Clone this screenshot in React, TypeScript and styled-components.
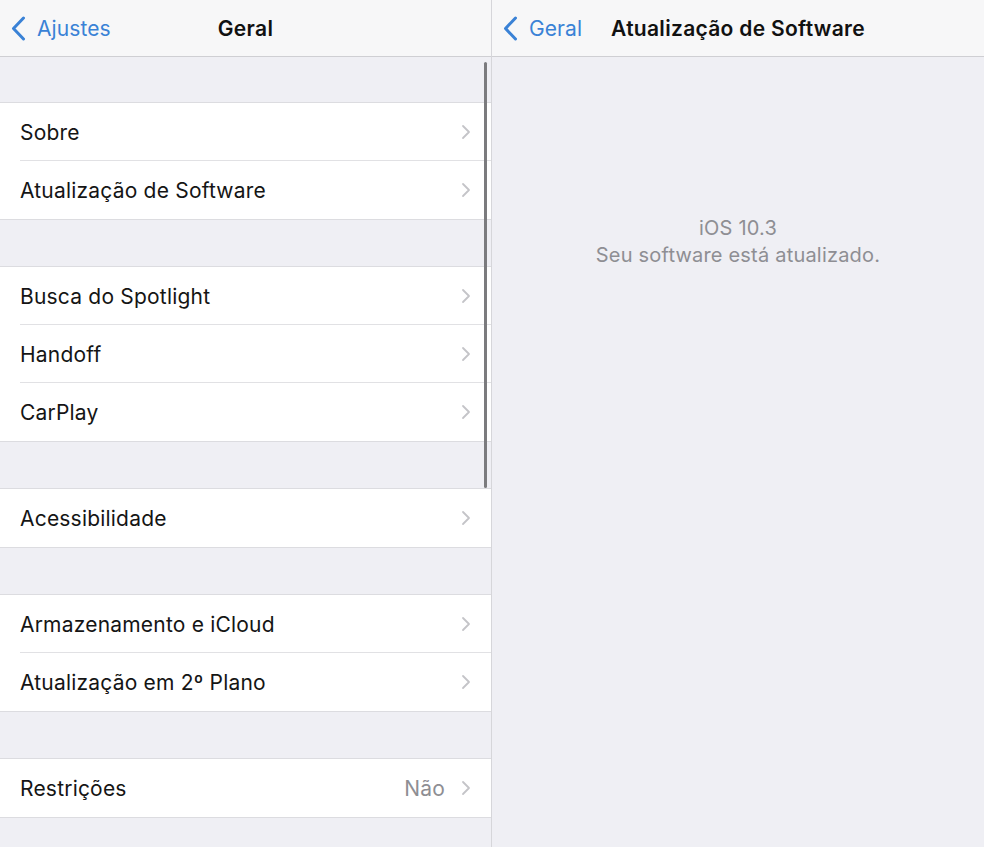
import React from 'react';
import styled, { createGlobalStyle } from 'styled-components';

const GlobalStyle = createGlobalStyle`
  html, body {
    margin: 0;
    padding: 0;
    background: #efeff4;
  }
  body {
    font-family: Inter, Roboto, "Liberation Sans", sans-serif;
    -webkit-font-smoothing: antialiased;
  }
`;

const Screen = styled.div`
  display: flex;
  width: 984px;
  height: 847px;
  overflow: hidden;
  background: #efeff4;
`;

const Pane = styled.div<{ $width?: number }>`
  position: relative;
  display: flex;
  flex-direction: column;
  ${props => (props.$width ? `width: ${props.$width}px; flex-shrink: 0;` : 'flex: 1;')}
  border-right: ${props => (props.$width ? '1px solid #d6d6da' : 'none')};
`;

const NavBar = styled.div`
  position: relative;
  display: flex;
  align-items: center;
  justify-content: center;
  height: 57px;
  flex-shrink: 0;
  background: #f7f7f8;
  border-bottom: 1px solid #cfcfd3;
  box-sizing: border-box;
`;

const BackButton = styled.div`
  position: absolute;
  left: 11px;
  top: 0;
  bottom: 0;
  display: flex;
  align-items: center;
  gap: 11px;
  color: #3a82d6;
  font-size: 21px;
  letter-spacing: 0.1px;
`;

const NavTitle = styled.div`
  font-size: 21px;
  font-weight: 600;
  color: #111;
  letter-spacing: 0.3px;
`;

const List = styled.div`
  display: flex;
  flex-direction: column;
  padding-top: 45px;
  gap: 46px;
`;

const Group = styled.div`
  background: #fff;
  border-top: 1px solid #dcdce0;
  border-bottom: 1px solid #dcdce0;
`;

const Row = styled.div<{ $last?: boolean }>`
  position: relative;
  display: flex;
  align-items: center;
  height: 58px;
  padding-left: 20px;
  padding-right: 20px;
  &::after {
    content: '';
    display: ${props => (props.$last ? 'none' : 'block')};
    position: absolute;
    left: 20px;
    right: 0;
    bottom: 0;
    height: 1px;
    background: #e1e1e4;
  }
`;

const RowLabel = styled.div`
  flex: 1;
  font-size: 21px;
  color: #151515;
  letter-spacing: 0.2px;
`;

const RowValue = styled.div`
  font-size: 21px;
  color: #8e8e93;
  letter-spacing: 0.2px;
  margin-right: 16px;
`;

const ScrollIndicator = styled.div`
  position: absolute;
  right: 4px;
  top: 62px;
  width: 3px;
  height: 426px;
  border-radius: 2px;
  background: #7b7b7e;
`;

const StatusBlock = styled.div`
  display: flex;
  flex-direction: column;
  align-items: center;
  padding-top: 158px;
  color: #8e8e93;
  font-size: 20px;
  line-height: 27px;
  letter-spacing: 0.2px;
`;

const Chevron = () => (
  <svg width="10" height="16" viewBox="0 0 10 16">
    <path d="M2 2 L8 8 L2 14" fill="none" stroke="#c4c4c8" strokeWidth="1.8" strokeLinecap="round" strokeLinejoin="round" />
  </svg>
);

const BackChevron = () => (
  <svg width="15" height="25" viewBox="0 0 15 25">
    <path d="M12.5 2 L2.5 12.5 L12.5 23" fill="none" stroke="#3a82d6" strokeWidth="3" strokeLinecap="round" strokeLinejoin="round" />
  </svg>
);

interface Item {
  label: string;
  value?: string;
}

const groups: Item[][] = [
  [{ label: 'Sobre' }, { label: 'Atualização de Software' }],
  [{ label: 'Busca do Spotlight' }, { label: 'Handoff' }, { label: 'CarPlay' }],
  [{ label: 'Acessibilidade' }],
  [{ label: 'Armazenamento e iCloud' }, { label: 'Atualização em 2º Plano' }],
  [{ label: 'Restrições', value: 'Não' }],
];

const App: React.FC = () => (
  <Screen>
    <GlobalStyle />
    <Pane $width={491}>
      <NavBar>
        <BackButton>
          <BackChevron />
          Ajustes
        </BackButton>
        <NavTitle>Geral</NavTitle>
      </NavBar>
      <List>
        {groups.map((items, gi) => (
          <Group key={gi}>
            {items.map((item, i) => (
              <Row key={item.label} $last={i === items.length - 1}>
                <RowLabel>{item.label}</RowLabel>
                {item.value && <RowValue>{item.value}</RowValue>}
                <Chevron />
              </Row>
            ))}
          </Group>
        ))}
      </List>
      <ScrollIndicator />
    </Pane>
    <Pane>
      <NavBar>
        <BackButton>
          <BackChevron />
          Geral
        </BackButton>
        <NavTitle>Atualização de Software</NavTitle>
      </NavBar>
      <StatusBlock>
        <div>iOS 10.3</div>
        <div>Seu software está atualizado.</div>
      </StatusBlock>
    </Pane>
  </Screen>
);

export default App;
